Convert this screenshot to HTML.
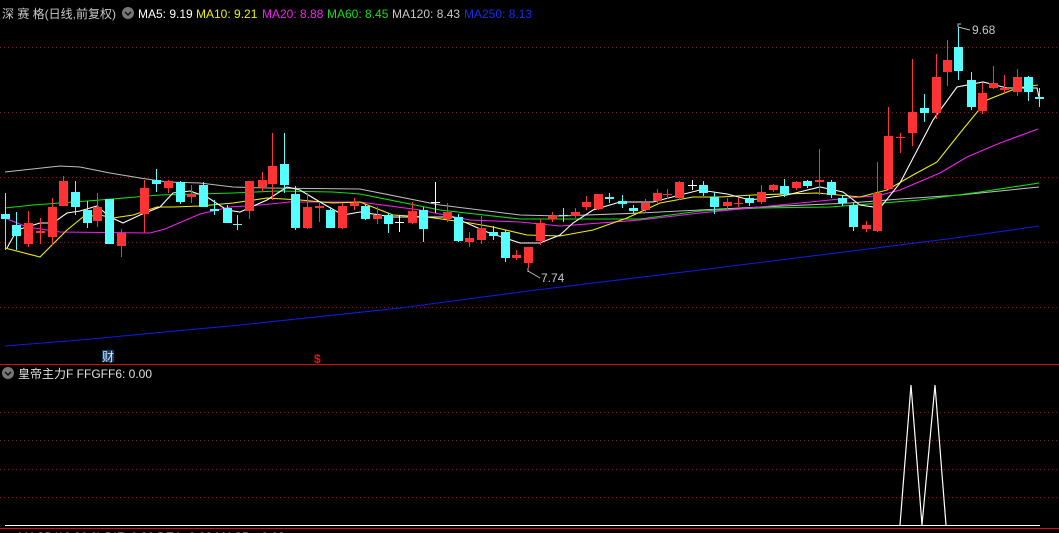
<!DOCTYPE html>
<html><head><meta charset="utf-8"><style>
html,body{margin:0;padding:0;background:#000;width:1059px;height:533px;overflow:hidden}
svg{display:block}
text{font-family:"Liberation Sans","Noto Sans CJK SC",sans-serif;font-size:12px}
</style></head><body>
<svg id="s" width="1059" height="533" xmlns="http://www.w3.org/2000/svg">
<g stroke="#8a1a1a" stroke-dasharray="1,3" stroke-width="1">
<line x1="0" y1="47.5" x2="1059" y2="47.5"/><line x1="0" y1="112.5" x2="1059" y2="112.5"/>
<line x1="0" y1="177.5" x2="1059" y2="177.5"/><line x1="0" y1="242.5" x2="1059" y2="242.5"/>
<line x1="0" y1="307.5" x2="1059" y2="307.5"/>
<line x1="0" y1="412.5" x2="1059" y2="412.5"/><line x1="0" y1="440.5" x2="1059" y2="440.5"/>
<line x1="0" y1="469.5" x2="1059" y2="469.5"/><line x1="0" y1="497.5" x2="1059" y2="497.5"/>
</g>
<line x1="0" y1="364.5" x2="1059" y2="364.5" stroke="#d01010"/>
<line x1="0" y1="528.5" x2="1059" y2="528.5" stroke="#d01010"/>
<line x1="5" y1="525.5" x2="1040" y2="525.5" stroke="#fff"/>
<polyline points="900,525 911,385 922,525 935,385 946,525" fill="none" stroke="#fff" stroke-width="1.2"/>
<g fill="none" stroke-width="1.1">
<polyline stroke="#0a1ee0" points="5,346 80,340 240,325 400,308 528,291 700,270 860,250 955,238 1039,226"/>
<polyline stroke="#bdbdbd" points="5,172 60,166 80,167 110,173 140,178 167,182 200,183 233,187 267,188 360,189 440,205 520,215 560,216 640,213 700,210 760,207 850,203 900,199 960,195 1000,191 1039,187"/>
<polyline stroke="#10e010" points="5,208 33,205 60,203 100,200 160,195 233,193 277,191 333,192 360,194 440,210 520,219 640,219 700,211 760,208 830,207 920,200 980,192 1039,183"/>
<polyline stroke="#f020f0" points="5,218 27,227 60,232 150,233 165,229 200,214 230,207 260,205 290,202 360,202 420,210 470,220 520,222 560,226 640,220 700,213 780,205 860,197 877,196 900,190 940,173 967,157 1000,143 1038,129"/>
<polyline stroke="#f0f000" points="5,248 40,257 67,230 83,217 100,215 113,218 133,215 157,207 173,207 200,206 233,203 267,198 300,200 333,203 360,202 393,215 427,217 470,223 493,227 527,235 560,236 593,230 627,218 660,203 693,197 720,197 753,195 817,193 860,197 887,190 913,175 937,162 960,133 987,100 1017,88 1038,85"/>
<polyline stroke="#ffffff" points="7,248 17,230 40,223 53,223 67,213 80,211 97,206 110,217 123,223 140,215 160,207 173,193 190,191 207,197 227,210 240,212 267,200 287,187 300,190 320,202 343,215 360,212 393,217 453,217 487,232 520,243 540,243 560,235 573,223 593,210 620,202 653,202 680,195 700,190 727,194 750,200 787,195 820,187 843,192 860,205 880,208 900,183 933,120 957,87 983,82 1007,88 1037,88 1039,97"/>
</g>
<g id="c"></g>
<text x="2" y="18" fill="#c8c8c8" font-size="13">深 赛 格(日线,前复权)</text>
<circle cx="128" cy="13" r="6" fill="#777"/><path d="M125,12 L128,15 L131,12" stroke="#111" stroke-width="1.5" fill="none"/>
<text x="138" y="18" fill="#fff">MA5: 9.19</text>
<text x="196" y="18" fill="#f0f000">MA10: 9.21</text>
<text x="262" y="18" fill="#f020f0">MA20: 8.88</text>
<text x="327" y="18" fill="#10e010">MA60: 8.45</text>
<text x="392" y="18" fill="#c8c8c8">MA120: 8.43</text>
<text x="464" y="18" fill="#1030f0">MA250: 8.13</text>
<path d="M958,27 L958,24 L961,24 M958,27 L970,30" stroke="#bbb" fill="none"/>
<text x="972" y="34" fill="#c8c8c8">9.68</text>
<path d="M528,268 L528,272 M528,271 L540,278" stroke="#bbb" fill="none"/>
<text x="541" y="282" fill="#c8c8c8">7.74</text>
<rect x="102" y="350" width="12" height="12" fill="#0d3d6d"/>
<text x="102" y="361" fill="#e0e0e0" font-size="11">财</text>
<text x="314" y="363" fill="#f01010" font-size="11" font-weight="bold">$</text>
<circle cx="8" cy="373" r="6" fill="#777"/><path d="M5,372 L8,375 L11,372" stroke="#111" stroke-width="1.5" fill="none"/>
<text x="18" y="378" fill="#e0e0e0">皇帝主力F  FFGFF6: 0.00</text>
<text x="18" y="541" fill="#ccc">MACD(12,26,9) DIF: 0.30 DEA: 0.32 MACD: -0.03</text>
</svg>
<script>
var d=[
[5,214,219,'w',193,250,'c'],[16,225,236,'c',212,250],[28,223,244,'r',211,247],[40,231,233,'r',218,244],[52,207,237,'r',198,245],[63,181,206,'r',176,206],[75,192,207,'c',181,215],[87,210,223,'c',201,228],[97,207,221,'r',193,227],[109,199,244,'c',199,244],[121,233,246,'r',229,257],[144,188,214,'r',180,233],[156,180,184,'c',169,192],[168,181,188,'r',180,193],[180,182,202,'c',181,204],[191,194,197,'r',185,203],[203,185,207,'c',182,207],[214,209,211,'c',200,215],[227,208,223,'c',205,223],[237,224,225,'c',215,230],
[249,181,211,'r',181,219],[262,180,187,'r',172,192],[272,166,184,'r',133,200],[284,164,185,'c',133,193],[295,194,228,'c',186,230],[307,207,228,'r',193,229],[319,206,208,'r',202,222],[330,210,228,'c',207,228],[342,206,228,'r',203,229],[354,203,206,'r',198,210],
[365,206,219,'c',204,220],[377,215,219,'r',207,224],[388,215,224,'c',213,233],[399,222,223,'w',215,232],[412,211,223,'r',202,224],[423,210,229,'c',207,242],[435,202,203,'w',182,213],[447,212,219,'r',203,222],[458,217,241,'c',214,242],[469,238,242,'r',232,247],[481,228,240,'r',216,244],[493,232,236,'c',226,240],[505,232,258,'c',230,262],[516,255,258,'r',250,260],[528,247,263,'r',247,268],[540,223,241,'r',219,245],[552,216,219,'r',212,222],[563,215,216,'c',208,222],[575,212,216,'r',208,218],[586,202,207,'r',196,210],[598,194,209,'r',194,210],[609,197,199,'c',193,203],[622,201,204,'c',195,208],[633,208,211,'c',205,214],[645,203,210,'r',199,213],[657,193,201,'r',189,204],[667,194,195,'r',189,199],[679,182,198,'r',181,200],[692,185,186,'w',180,190],
[703,185,193,'c',181,196],[714,197,207,'c',192,214],[727,202,206,'r',198,211],[738,203,204,'r',198,207],[749,198,203,'c',195,206],[761,192,202,'r',185,204],[773,185,190,'r',184,192],[784,186,194,'c',179,197],[796,182,188,'r',181,190],[807,181,186,'c',180,188],[819,180,182,'r',149,195],[831,182,195,'c',180,198],[842,198,203,'c',195,206],[853,205,227,'c',202,231],[866,225,229,'r',221,232],[877,193,231,'r',162,232],[888,136,189,'r',107,190],[900,137,138,'r',133,153],[912,112,133,'r',59,146],[924,108,113,'c',94,122],[936,77,113,'r',54,119],[947,60,72,'r',40,86],[958,47,71,'c',27,80],[971,80,107,'c',72,110],[982,93,111,'r',83,114],[993,83,88,'r',66,89],[1004,88,90,'r',75,93],[1017,77,92,'r',69,96],[1028,77,92,'c',76,101],[1039,97,99,'c',88,107]];
var s='';
d.forEach(function(a){var col=a[3]=='r'?'#ff3333':(a[3]=='c'?'#55ffff':'#ffffff');if(a[6])col='#55ffff';
s+='<line x1="'+(a[0]+.5)+'" y1="'+a[4]+'" x2="'+(a[0]+.5)+'" y2="'+a[5]+'" stroke="'+col+'"/>';
var h=a[2]-a[1];if(h<2){s+='<line x1="'+(a[0]-4)+'" y1="'+(a[1]+.5)+'" x2="'+(a[0]+5)+'" y2="'+(a[1]+.5)+'" stroke="'+col+'"/>';}
else s+='<rect x="'+(a[0]-4)+'" y="'+a[1]+'" width="9" height="'+h+'" fill="'+col+'"/>';});
document.getElementById('c').innerHTML=s;
</script>
</body></html>
